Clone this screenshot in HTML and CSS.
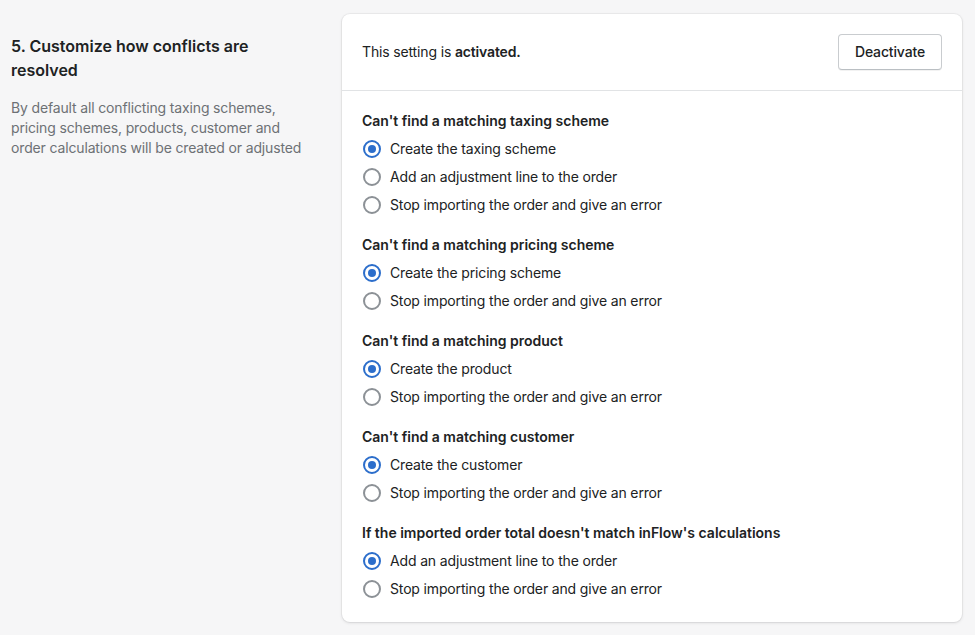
FILE: index.html
```html
<!DOCTYPE html>
<html lang="en">

<head>
  <title>Conflict settings</title>
  <link rel="stylesheet" href="styles.css">
</head>

<body>
  <div class="layout">
    <div class="annotation">
      <h2>5. Customize how conflicts are resolved</h2>
      <p>By default all conflicting taxing schemes, pricing schemes, products, customer and order calculations will be created or adjusted</p>
    </div>

    <div class="card">
      <div class="card-header">
        <span>This setting is <strong>activated.</strong></span>
        <button class="btn">Deactivate</button>
      </div>

      <div class="card-body">
        <fieldset class="group">
          <legend>Can't find a matching taxing scheme</legend>
          <label class="radio"><input type="radio" name="tax" checked><span>Create the taxing scheme</span></label>
          <label class="radio"><input type="radio" name="tax"><span>Add an adjustment line to the order</span></label>
          <label class="radio"><input type="radio" name="tax"><span>Stop importing the order and give an error</span></label>
        </fieldset>

        <fieldset class="group">
          <legend>Can't find a matching pricing scheme</legend>
          <label class="radio"><input type="radio" name="pricing" checked><span>Create the pricing scheme</span></label>
          <label class="radio"><input type="radio" name="pricing"><span>Stop importing the order and give an error</span></label>
        </fieldset>

        <fieldset class="group">
          <legend>Can't find a matching product</legend>
          <label class="radio"><input type="radio" name="product" checked><span>Create the product</span></label>
          <label class="radio"><input type="radio" name="product"><span>Stop importing the order and give an error</span></label>
        </fieldset>

        <fieldset class="group">
          <legend>Can't find a matching customer</legend>
          <label class="radio"><input type="radio" name="customer" checked><span>Create the customer</span></label>
          <label class="radio"><input type="radio" name="customer"><span>Stop importing the order and give an error</span></label>
        </fieldset>

        <fieldset class="group">
          <legend>If the imported order total doesn't match inFlow's calculations</legend>
          <label class="radio"><input type="radio" name="total" checked><span>Add an adjustment line to the order</span></label>
          <label class="radio"><input type="radio" name="total"><span>Stop importing the order and give an error</span></label>
        </fieldset>
      </div>
    </div>
  </div>
</body>

</html>
```

FILE: styles.css
```css
html,
body {
  margin: 0;
  height: 100%;
  overflow: hidden;
  background: #f6f6f7;
}

body {
  font-family: Inter, "Liberation Sans", sans-serif;
  font-size: 14px;
  line-height: 20px;
  letter-spacing: -0.15px;
  color: #202223;
}

.layout {
  display: grid;
  grid-template-columns: 306px 620px;
  column-gap: 25px;
  padding: 14px 13px 0 11px;
  align-items: start;
}

.annotation {
  padding-top: 20px;
}

.annotation h2 {
  margin: 0;
  font-size: 16px;
  line-height: 24px;
  font-weight: 600;
  letter-spacing: 0;
}

.annotation p {
  margin: 16px 0 0;
  color: #6d7175;
}

.card {
  background: #fff;
  border-radius: 8px;
  box-shadow: 0 0 0 1px rgba(63, 63, 68, 0.05), 0 1px 3px rgba(63, 63, 68, 0.15);
}

.card-header {
  display: flex;
  align-items: center;
  justify-content: space-between;
  padding: 20px;
  border-bottom: 1px solid #e1e3e5;
}

.card-header strong {
  font-weight: 600;
}

.btn {
  font: inherit;
  font-weight: 500;
  letter-spacing: inherit;
  color: #202223;
  background: #fff;
  border: 1px solid #c9cccf;
  border-bottom-color: #babfc3;
  border-radius: 4px;
  height: 36px;
  padding: 0 16px;
  box-shadow: 0 1px 0 rgba(0, 0, 0, 0.05);
}

.card-body {
  display: flex;
  flex-direction: column;
  gap: 16px;
  padding: 20px 20px 19px;
}

.group {
  margin: 0;
  padding: 0;
  border: 0;
  display: flex;
  flex-direction: column;
}

.group legend {
  padding: 0;
  margin-bottom: 4px;
  font-weight: 600;
  letter-spacing: 0;
}

.radio {
  display: flex;
  align-items: center;
  gap: 9px;
  height: 28px;
}

.radio input {
  appearance: none;
  margin: 0 0 0 1px;
  width: 18px;
  height: 18px;
  border: 2px solid #8c9196;
  border-radius: 50%;
  display: grid;
  place-content: center;
  background: #fff;
}

.radio input:checked {
  border-color: #2c6ecb;
}

.radio input:checked::before {
  content: "";
  width: 8px;
  height: 8px;
  border-radius: 50%;
  background: #2c6ecb;
}
```
